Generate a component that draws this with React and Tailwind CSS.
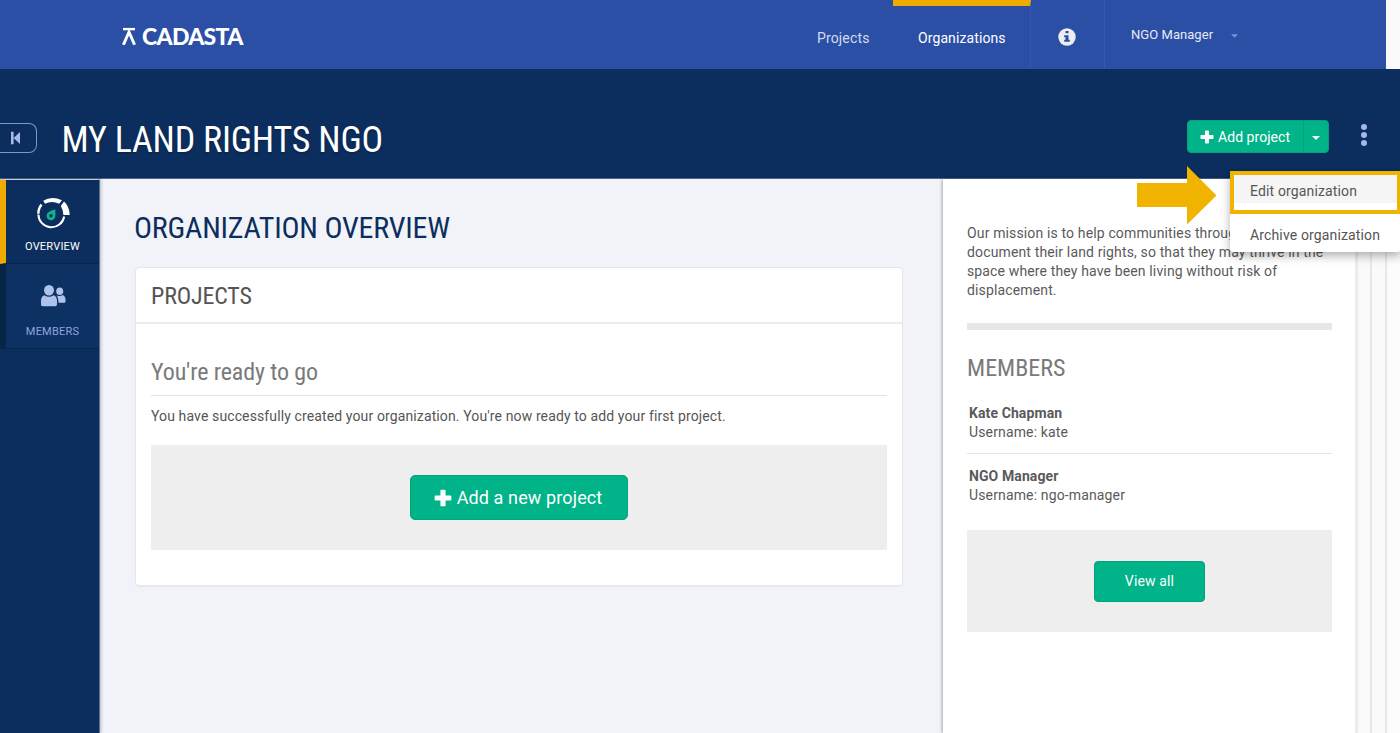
import React from "react";

const Plus = ({ className }) => (
  <svg viewBox="0 0 14 14" className={className} fill="currentColor">
    <path d="M5.7 0.5h2.6a.7.7 0 0 1 .7.7V5h3.8a.7.7 0 0 1 .7.7v2.6a.7.7 0 0 1-.7.7H9v3.8a.7.7 0 0 1-.7.7H5.7a.7.7 0 0 1-.7-.7V9H1.2a.7.7 0 0 1-.7-.7V5.7a.7.7 0 0 1 .7-.7H5V1.2a.7.7 0 0 1 .7-.7z" />
  </svg>
);

const Caret = ({ className }) => (
  <svg viewBox="0 0 8 4" className={className} fill="currentColor">
    <path d="M0 0h8L4 4z" />
  </svg>
);

const Gauge = () => (
  <svg width="34" height="34" viewBox="0 0 34 34" className="shrink-0" fill="none">
    <path d="M28.2 19.5A13 13 0 0 1 2.400 17.500" stroke="#fff" strokeWidth="2" />
    <path d="M2.400 16.800A13 13 0 0 1 5.600 7.600" stroke="#fff" strokeWidth="2.400" />
    <path d="M7.200 3.700Q15.500 -1.200 26 3.200L23.200 6.800Q16 3 9 6.800z" fill="#fff" />
    <path d="M28 4.600Q33.500 9.500 33.700 18H27.400Q27.200 13 24.800 9z" fill="#fff" />
    <path d="M19.400 12.400V18.800A4.400 4.400 0 1 1 11.200 16.600Q13.500 13.400 19.400 12.400zM15 17a1.700 1.700 0 1 0 .01 0z" fill="#0ab58a" fillRule="evenodd" />
  </svg>
);

const People = () => (
  <svg width="26" height="22" viewBox="0 0 26 22" fill="#afc2ec">
    <ellipse cx="9" cy="5.3" rx="5" ry="5.3" />
    <path d="M4.4 10.2Q9 13.2 13.6 10.2Q17 11.4 17 16v3.5a1.8 1.8 0 0 1-1.8 1.8H2.8A1.8 1.8 0 0 1 1 19.500V16Q1 11.400 4.400 10.200z" />
    <ellipse cx="19.700" cy="6.200" rx="3.500" ry="3.800" />
    <path d="M16.400 10.200Q19.500 12 22.700 10Q25.500 11.200 25.500 14.500V16.500a1.300 1.300 0 0 1-1.300 1.300H18.400V15.500Q18.400 12 16.400 10.200z" />
  </svg>
);

function TopBar() {
  return (
    <header className="flex h-[69px] w-[1386px] bg-[#2c4fa6] text-[14px] tracking-[0.15px] text-[#d3dbee]">
      <div className="flex flex-1 items-start pt-[24px] pl-[122px]">
        <svg width="14" height="18" viewBox="0 0 14 18" className="mt-[3px] shrink-0" fill="none" stroke="#fff">
          <path d="M1 2.100H13" strokeWidth="2.400" />
          <path d="M1.400 17.800L7 5L12.600 17.800" strokeWidth="2.900" />
        </svg>
        <span className="ml-[6px] font-['Lato',sans-serif] text-[23px] leading-[24px] font-black tracking-[-0.7px] text-white">CADASTA</span>
      </div>
      <nav className="flex">
        <div className="w-[100px] pt-[30px] pl-[24px] leading-[16px]">Projects</div>
        <div className="w-[138px] border-t-[6px] border-r border-t-[#f0ab00] border-r-[#3358b2] pt-[24px] pl-[25px] leading-[16px] tracking-[0.1px] text-white">Organizations</div>
        <div className="flex w-[74px] justify-center border-r border-[#3358b2] pt-[28px] pr-[2px]">
          <svg width="18" height="18" viewBox="0 0 18 18">
            <circle cx="9" cy="9" r="8.700" fill="#eeeef0" />
            <path d="M7.500 3h3v2.300h-3zM6.200 7.200h4.300v4.600h1.300v2H6.200v-2h1.300V9.200H6.200z" fill="#2c4fa6" />
          </svg>
        </div>
        <div className="flex w-[281px] items-start pt-[27px] pl-[26px] leading-[16px] text-[#e6eaf5]">
          <span className="w-[100px] text-[13px] tracking-[0.05px] whitespace-nowrap">NGO Manager</span>
          <Caret className="mt-[7px] h-[4px] w-[7px] text-[#7590dc]" />
        </div>
      </nav>
    </header>
  );
}

function TitleBar() {
  return (
    <div className="flex h-[110px] items-start border-b border-[#4d6690] bg-[#0b2e5e]">
      <div className="mt-[54px] flex h-[30px] w-[37px] items-center rounded-r-[8px] border border-l-0 border-[#8095c4] pl-[11px]">
        <svg width="9" height="14" viewBox="0 0 9 14" fill="#a9b9ea">
          <path d="M0 .8h2.600v12.400H0zM9 1v12L2.600 7z" />
        </svg>
      </div>
      <h1 className="mt-[49px] ml-[24.500px] flex-1 text-[36px] leading-[44px] tracking-[-0.2px] whitespace-nowrap text-white [font-stretch:75%] [text-shadow:0_1px_2px_rgba(0,0,0,0.3)]">MY LAND RIGHTS NGO</h1>
      <div className="mt-[51px] flex h-[33px] w-[142px] rounded-[4px] border border-[#06a27b] bg-[#00b388] text-[14px] tracking-[0.05px] text-white">
        <div className="flex w-[116px] items-center border-r border-[#06a27b] pl-[12px]">
          <Plus className="h-[14px] w-[14px]" />
          <span className="ml-[4px] pt-px whitespace-nowrap">Add project</span>
        </div>
        <div className="flex flex-1 items-center justify-center">
          <Caret className="mt-[2px] h-[4px] w-[8px]" />
        </div>
      </div>
      <div className="mt-[55px] mr-[33px] ml-[32px] flex flex-col gap-[2px]">
        <span className="size-[6px] rounded-full bg-[#a5b6ea]" />
        <span className="size-[6px] rounded-full bg-[#a5b6ea]" />
        <span className="size-[6px] rounded-full bg-[#a5b6ea]" />
      </div>
    </div>
  );
}

function Sidebar() {
  return (
    <aside className="z-10 w-[100px] shrink-0 border-t border-r border-t-[#c3cbdb] border-r-[#5d7295] bg-[#0b2e5e] text-[11px] tracking-[0.2px] shadow-[1px_0_3px_rgba(0,0,0,0.25)]">
      <div className="flex h-[84px] flex-col items-center border-b border-l-[6px] border-b-[#082548] border-l-[#f0ab00] pt-[17px] text-white">
        <Gauge />
        <span className="mt-[9px] leading-[14px]">OVERVIEW</span>
      </div>
      <div className="flex h-[85px] flex-col items-center border-b border-l-[6px] border-b-[#082548] border-l-[#082548] bg-[#0d3163] pt-[21px] text-[#8fa5dc]">
        <People />
        <span className="mt-[18px] leading-[14px]">MEMBERS</span>
      </div>
    </aside>
  );
}

function Main() {
  return (
    <main className="w-[843px] shrink-0 bg-[#f2f3f8] px-[35px] pt-[31px]">
      <h2 className="-ml-px text-[30px] leading-[36px] tracking-[-0.2px] whitespace-nowrap text-[#0b2e5e] [font-stretch:75%]">ORGANIZATION OVERVIEW</h2>
      <section className="mt-[21px] h-[319px] w-[768px] rounded-[4px] border border-[#e6e7ea] bg-white shadow-[0_1px_1px_rgba(0,0,0,0.04)]">
        <h3 className="h-[56px] border-b-2 border-[#ececee] pt-[13px] pl-[15px] text-[24px] leading-[30px] tracking-[-0.15px] text-[#555] [font-stretch:75%]">PROJECTS</h3>
        <div className="px-[15px] pt-[33px]">
          <h4 className="h-[39px] border-b border-[#e2e2e4] text-[24px] leading-[30px] tracking-[-0.12px] text-[#7a7a7a] [font-stretch:75%]">You're ready to go</h4>
          <p className="mt-[10px] text-[14px] leading-[20px] tracking-[0.12px] whitespace-nowrap text-[#555]">You have successfully created your organization. You're now ready to add your first project.</p>
          <div className="mt-[19px] flex h-[105px] items-center justify-center bg-[#eee]">
            <button className="flex h-[45px] w-[218px] items-center justify-center rounded-[5px] border border-[#06a27b] bg-[#00b388] pr-[2px] text-[18px] tracking-[0.12px] text-white">
              <Plus className="h-[18px] w-[18px]" />
              <span className="ml-[5px] whitespace-nowrap">Add a new project</span>
            </button>
          </div>
        </div>
      </section>
    </main>
  );
}

const members = [
  ["Kate Chapman", "kate"],
  ["NGO Manager", "ngo-manager"],
];

function Details() {
  return (
    <aside className="z-10 w-[414px] shrink-0 border-r-2 border-[#ececee] bg-white pr-[23px] pl-[24px] text-[14px] leading-[19px] tracking-[0.14px] text-[#5a5a5c] shadow-[-1px_0_3px_rgba(0,0,0,0.3)]">
      <p className="pt-[45px] whitespace-nowrap">
        Our mission is to help communities through
        <br />
        document their land rights, so that they may thrive in the
        <br />
        space where they have been living without risk of
        <br />
        displacement.
      </p>
      <div className="mt-[23px] h-[7px] bg-[#e6e7e9]" />
      <h3 className="mt-[23px] text-[24px] leading-[30px] tracking-normal text-[#7a7a7a] [font-stretch:75%]">MEMBERS</h3>
      <ul className="mt-[9px]">
        {members.map(([name, user]) => (
          <li key={user} className="h-[62px] border-b border-[#e2e2e4] pt-[12px] pl-[2px] last:h-[64px] last:border-b-0 last:pt-[13px]">
            <div className="font-bold tracking-[0.1px]">{name}</div>
            <div>Username: {user}</div>
          </li>
        ))}
      </ul>
      <div className="mt-[12px] flex h-[102px] items-center justify-center bg-[#eee]">
        <button className="h-[41px] w-[111px] rounded-[4px] border border-[#06a27b] bg-[#00b388] text-white">View all</button>
      </div>
    </aside>
  );
}

export default function App() {
  return (
    <div className="relative flex h-[733px] w-[1400px] flex-col overflow-hidden bg-[#fafafa] font-['Roboto',sans-serif]">
      <TopBar />
      <TitleBar />
      <div className="flex flex-1">
        <Sidebar />
        <Main />
        <Details />
        <div className="w-[15px] shrink-0 border-r-2 border-[#e8e8e9] bg-[#fafafa]" />
        <div className="w-[15px] shrink-0 border-r-2 border-[#e8e8e9] bg-[#fafafa]" />
        <div className="flex-1 bg-[#fcfcfc]" />
      </div>
      <div className="absolute top-[171px] left-[1230px] z-20 h-[81px] w-[171px] rounded-b-[4px] bg-white text-[14px] tracking-[0.14px] text-[#555] shadow-[0_4px_10px_rgba(0,0,0,0.3)]">
        <div className="h-[43px] border-4 border-[#f0b400]">
          <div className="h-[28px] bg-[#f5f5f5] pt-[6px] pl-[16px] leading-[20px]">Edit organization</div>
        </div>
        <div className="pt-[11px] pl-[20px] leading-[20px] whitespace-nowrap">Archive organization</div>
      </div>
      <svg width="80" height="60" viewBox="0 0 80 60" className="absolute top-[166px] left-[1137px] z-20">
        <path d="M0 17H50V0L79.500 29.500L50 58.500V41H0z" fill="#f0b400" />
      </svg>
    </div>
  );
}
